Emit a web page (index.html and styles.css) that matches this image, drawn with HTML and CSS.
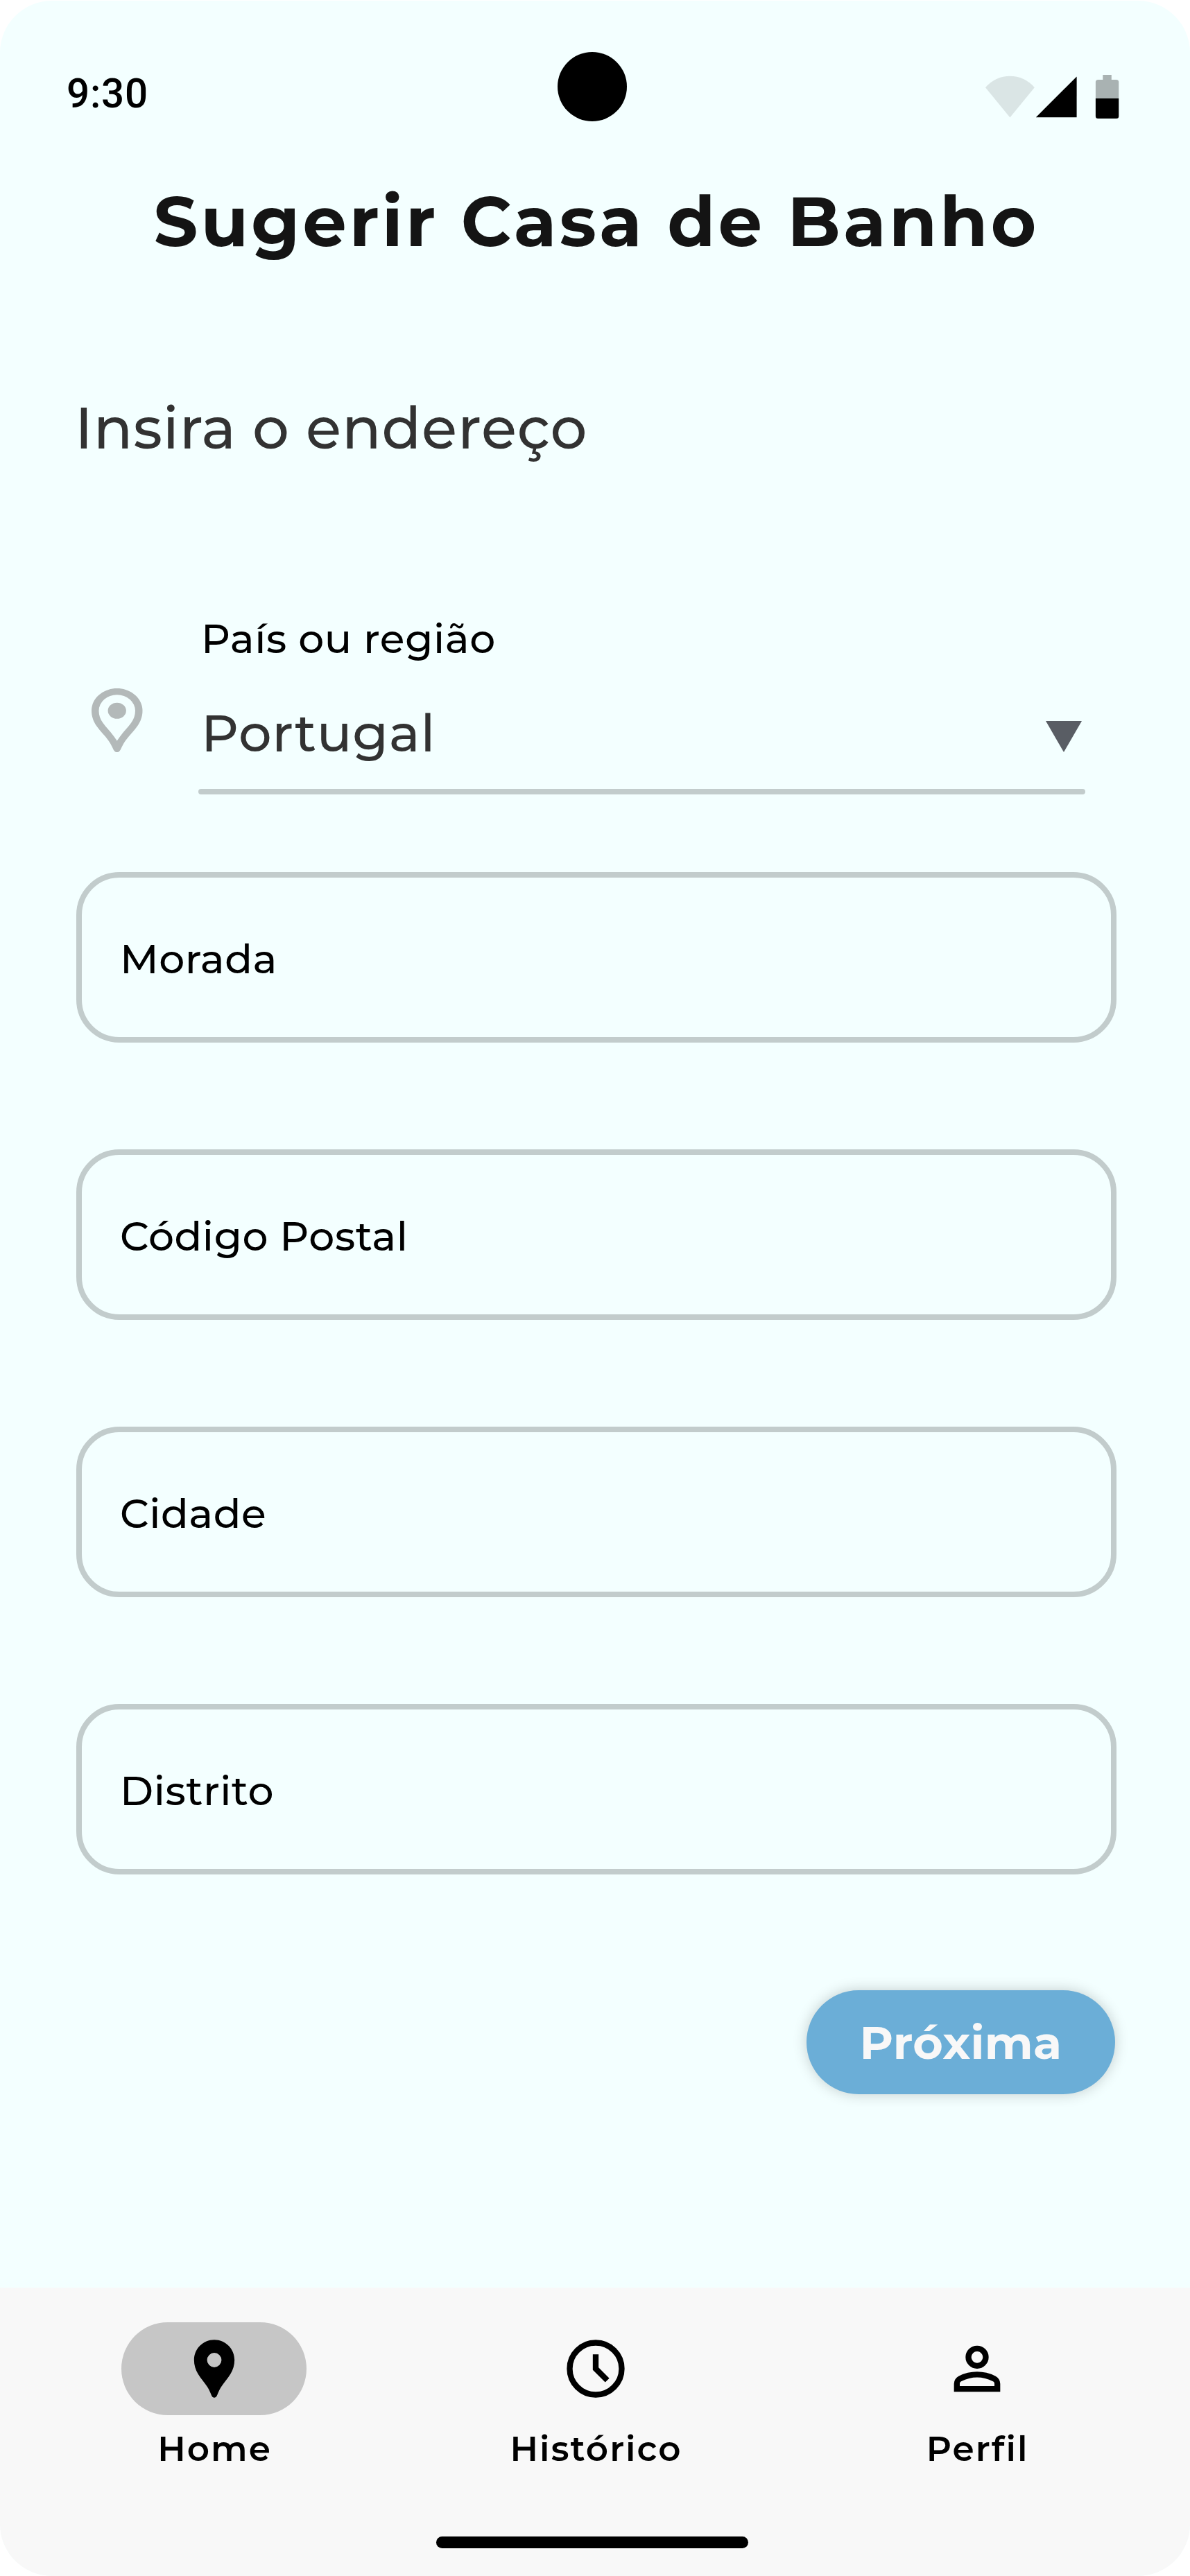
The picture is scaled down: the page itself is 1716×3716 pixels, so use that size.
FILE: index.html
```html
<!DOCTYPE html>
<html lang="pt">
<head>
  <meta charset="utf-8">
  <title>Sugerir Casa de Banho</title>
  <link rel="stylesheet" href="styles.css">
</head>
<body>
  <div class="screen">
    <header class="status">
      <span class="status-time">9:30</span>
      <span class="camera"></span>
      <svg class="status-icons" viewBox="0 0 192 63" aria-hidden="true">
        <path d="M0 18.2A46.3 46.3 0 0 1 70.8 18.2L35.4 61.5z" fill-opacity=".1"/>
        <path d="M131.6 2.5V61.3H72.8z"/>
        <path d="M169.3 0h12.5v7h7a3.5 3.5 0 0 1 3.5 3.5V34h-33.4V10.5a3.5 3.5 0 0 1 3.5-3.5h6.9z" fill-opacity=".3"/>
        <path d="M158.9 34h33.4v25.5a3.5 3.5 0 0 1-3.5 3.5h-26.4a3.5 3.5 0 0 1-3.5-3.5z"/>
      </svg>
    </header>

    <main class="content">
      <h1 class="title">Sugerir Casa de Banho</h1>
      <h2 class="subtitle">Insira o endereço</h2>

      <div class="country">
        <svg class="country-pin" viewBox="5 2 14 20" preserveAspectRatio="none" aria-hidden="true">
          <path fill-rule="evenodd" d="M12 2C8.13 2 5 5.13 5 9c0 1.74.5 3.37 1.41 4.84.95 1.54 2.2 2.86 3.16 4.4.47.75.81 1.45 1.17 2.26.26.55.47 1.5 1.26 1.5s1-.95 1.25-1.5c.37-.81.7-1.51 1.17-2.26.96-1.53 2.21-2.85 3.16-4.4C18.5 12.37 19 10.74 19 9c0-3.87-3.13-7-7-7zM17 9c0 1.38-.4 2.7-1.12 3.79-.87 1.4-2 2.6-2.87 4-.36.57-.69 1-1.01 1.62-.32-.62-.65-1.05-1.01-1.62-.87-1.4-2-2.6-2.87-4C7.4 11.7 7 10.38 7 9a5 5 0 0 1 10 0z"/>
          <circle cx="12" cy="9" r="2.5"/>
        </svg>
        <div class="select">
          <span class="select-label">País ou região</span>
          <div class="select-row">
            <span class="select-value">Portugal</span>
            <svg class="select-arrow" viewBox="0 0 52 45" aria-hidden="true"><path d="M0 0h52L26 45z"/></svg>
          </div>
          <span class="select-line"></span>
        </div>
      </div>

      <div class="fields">
        <div class="field">Morada</div>
        <div class="field">Código Postal</div>
        <div class="field">Cidade</div>
        <div class="field">Distrito</div>
      </div>

      <button class="next" type="button">Próxima</button>
    </main>

    <footer class="bottom">
      <nav class="nav">
        <a class="nav-item nav-item-active">
          <span class="nav-pill">
            <svg class="nav-icon" viewBox="0 0 24 24" aria-hidden="true"><path fill-rule="evenodd" d="M12 2C8.13 2 5 5.13 5 9c0 1.74.5 3.37 1.41 4.84.95 1.54 2.2 2.86 3.16 4.4.47.75.81 1.45 1.17 2.26.26.55.47 1.5 1.26 1.5s1-.95 1.25-1.5c.37-.81.7-1.51 1.17-2.26.96-1.53 2.21-2.85 3.16-4.4C18.5 12.37 19 10.74 19 9c0-3.87-3.13-7-7-7zm0 9.5a2.5 2.5 0 0 1 0-5 2.5 2.5 0 0 1 0 5z"/></svg>
          </span>
          <span class="nav-label">Home</span>
        </a>
        <a class="nav-item">
          <span class="nav-pill">
            <svg class="nav-icon" viewBox="0 0 24 24" fill="none" stroke="#000" stroke-width="2" aria-hidden="true"><circle cx="12" cy="12" r="9"/><path d="M12 7v5l4 4"/></svg>
          </span>
          <span class="nav-label">Histórico</span>
        </a>
        <a class="nav-item">
          <span class="nav-pill">
            <svg class="nav-icon" viewBox="0 0 24 24" aria-hidden="true"><circle cx="12" cy="8" r="3" fill="none" stroke="#000" stroke-width="2"/><path fill-rule="evenodd" d="M4 20v-2.8q0-.85.438-1.562Q4.875 14.925 5.6 14.55q1.55-.775 3.15-1.163T12 13q1.65 0 3.25.387t3.15 1.163q.725.375 1.163 1.088Q20 16.35 20 17.2V20zm2-2h12v-.8q0-.275-.137-.5-.138-.225-.363-.35-1.35-.675-2.725-1.012Q13.4 15 12 15t-2.775.338Q7.85 15.675 6.5 16.35q-.225.125-.363.35Q6 16.925 6 17.2z"/></svg>
          </span>
          <span class="nav-label">Perfil</span>
        </a>
      </nav>
      <span class="home-bar"></span>
    </footer>
  </div>
</body>
</html>
```
FILE: styles.css
```css
* {
  box-sizing: border-box;
}

body {
  margin: 0;
  padding-top: 1px;
  background: #fff;
  font-family: Montserrat, Inter, sans-serif;
  color: #000;
}

.screen {
  display: flex;
  flex-direction: column;
  width: 1716px;
  height: 3715px;
  overflow: hidden;
  border-radius: 75px;
  background: #f3ffff;
}

/* Status bar */
.status {
  position: relative;
  display: flex;
  justify-content: space-between;
  height: 217px;
  padding: 102px 103px 0 96px;
}

.status-time {
  font: 500 58.3px/65px Roboto, sans-serif;
  letter-spacing: 0.8px;
}

.camera {
  position: absolute;
  top: 74px;
  left: 804px;
  width: 100px;
  height: 100px;
  border-radius: 50%;
  background: #000;
}

.status-icons {
  width: 192px;
  height: 63px;
  margin-top: 5px;
  overflow: visible;
}

/* Form */
.content {
  display: flex;
  flex-direction: column;
  padding: 41px 106px 0 110px;
}

.title {
  margin: 0;
  font-size: 100px;
  font-weight: 700;
  line-height: 120px;
  letter-spacing: 4.165px;
  text-align: center;
  color: #141414;
}

.subtitle {
  margin: 188px 0 0 -2px;
  font-size: 83.3px;
  font-weight: 500;
  line-height: 100px;
  letter-spacing: 0.01em;
  color: #323232;
}

.country {
  display: flex;
  margin-top: 214px;
  padding: 0 45px 0 22px;
  gap: 80.5px;
}

.country-pin {
  width: 73.5px;
  height: 92.2px;
  margin-top: 112px;
  fill: #b3b9b9;
}

.select {
  display: flex;
  flex: 1;
  flex-direction: column;
}

.select-label {
  padding-left: 4px;
  font-size: 58.3px;
  font-weight: 500;
  line-height: 82px;
  letter-spacing: 0.01em;
}

.select-row {
  display: flex;
  justify-content: space-between;
  margin-top: 44px;
  padding: 0 5px 0 4px;
}

.select-value {
  font-size: 75px;
  font-weight: 500;
  line-height: 100px;
  letter-spacing: 0.01em;
  color: #323232;
}

.select-arrow {
  width: 52px;
  height: 45px;
  margin-top: 33px;
  fill: #595d64;
}

.select-line {
  height: 8.4px;
  margin-top: 30.6px;
  border-radius: 4.2px;
  background: #c2cccc;
}

.fields {
  display: grid;
  gap: 154px;
  width: 1500px;
  margin-top: 112px;
}

.field {
  height: 246px;
  padding-left: 55px;
  border: 8px solid #c2cccc;
  border-radius: 62px;
  font-size: 58.3px;
  font-weight: 500;
  line-height: 235px;
  letter-spacing: 0.01em;
}

.next {
  align-self: flex-end;
  width: 445px;
  height: 150px;
  margin: 167px 2px 0 0;
  padding: 2px 0 0;
  border: 0;
  border-radius: 75px;
  background: #6baed7;
  box-shadow: 0 0 20px rgba(0, 0, 0, 0.2);
  font: 700 66.6px/148px Montserrat, Inter, sans-serif;
  letter-spacing: 0.4px;
  color: #f8f8f8;
}

/* Bottom navigation */
.bottom {
  height: 415.7px;
  margin-top: auto;
  padding-top: 50px;
  background: #f8f8f8;
}

.nav {
  display: grid;
  grid-template-columns: repeat(3, 550px);
  padding-left: 33.6px;
}

.nav-item {
  display: flex;
  flex-direction: column;
  align-items: center;
  gap: 16px;
}

.nav-pill {
  display: flex;
  align-items: center;
  justify-content: center;
  width: 266.6px;
  height: 133.3px;
  border-radius: 67px;
}

.nav-item-active .nav-pill {
  background: #c6c6c6;
}

.nav-icon {
  width: 100px;
  height: 100px;
}

.nav-label {
  padding-left: 2px;
  font-size: 50px;
  font-weight: 600;
  line-height: 66px;
  letter-spacing: 2.08px;
}

.home-bar {
  display: block;
  width: 450px;
  height: 17.5px;
  margin: 93px 0 0 629px;
  border-radius: 9px;
  background: #000;
}
```
